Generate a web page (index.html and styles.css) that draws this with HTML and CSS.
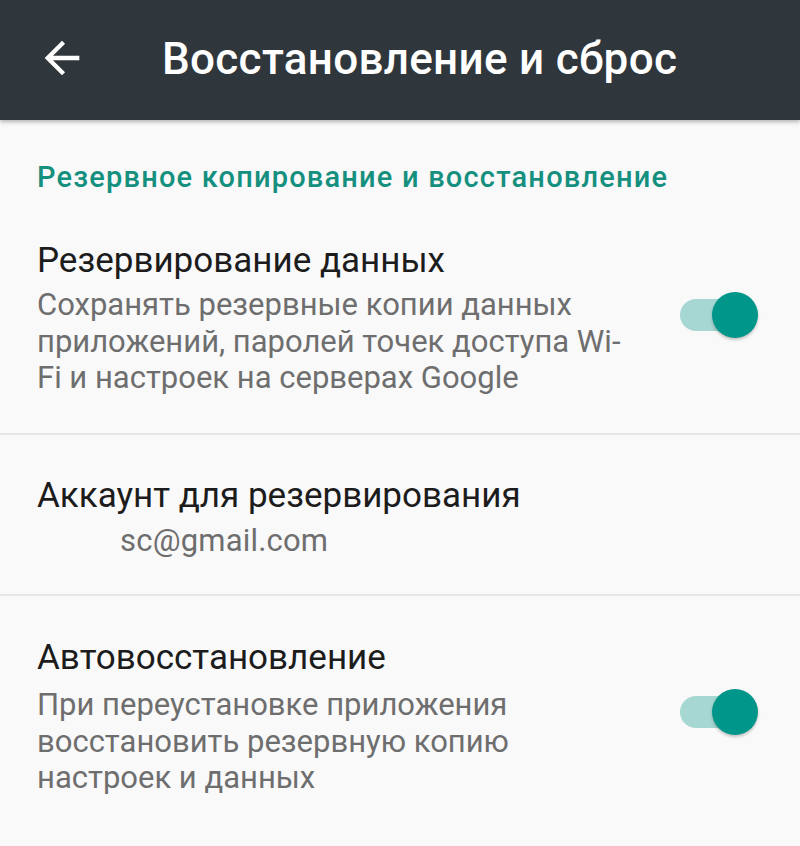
FILE: index.html
```html
<!DOCTYPE html>
<html lang="ru">
<head>
<meta charset="utf-8">
<title>Восстановление и сброс</title>
<link rel="stylesheet" href="styles.css">
</head>
<body>
<header class="appbar">
  <svg class="back" viewBox="0 0 24 24" width="52" height="52" aria-hidden="true">
    <path fill="#ffffff" d="M20 11H7.83l5.59-5.59L12 4l-8 8 8 8 1.41-1.41L7.83 13H20v-2z"/>
  </svg>
  <h1 class="title">Восстановление и сброс</h1>
</header>
<main class="list">
  <div class="category">Резервное копирование и восстановление</div>
  <div class="item backup">
    <div class="text">
      <div class="item-title">Резервирование данных</div>
      <div class="item-sub">Сохранять резервные копии данных<br>приложений, паролей точек доступа Wi-<br>Fi и настроек на серверах Google</div>
    </div>
    <div class="switch"><span class="track"></span><span class="thumb"></span></div>
  </div>
  <div class="item divided account">
    <div class="text">
      <div class="item-title">Аккаунт для резервирования</div>
      <div class="item-sub email">sc@gmail.com</div>
    </div>
  </div>
  <div class="item divided restore">
    <div class="text">
      <div class="item-title">Автовосстановление</div>
      <div class="item-sub">При переустановке приложения<br>восстановить резервную копию<br>настроек и данных</div>
    </div>
    <div class="switch"><span class="track"></span><span class="thumb"></span></div>
  </div>
</main>
</body>
</html>
```
FILE: styles.css
```css
html, body {
  margin: 0;
  padding: 0;
}
body {
  background: #f9f9fa;
  font-family: Roboto, "Noto Sans", sans-serif;
  width: 800px;
  height: 846px;
  overflow: hidden;
}
.appbar {
  height: 120px;
  background: #30373c;
  display: flex;
  align-items: center;
  box-shadow: 0 2px 4px rgba(0, 0, 0, 0.28);
  position: relative;
  z-index: 1;
}
.back {
  margin-left: 36px;
  margin-top: -4px;
  flex: none;
}
.title {
  margin: 0 0 0 74px;
  color: #ffffff;
  font-weight: 500;
  font-size: 44px;
  letter-spacing: 0.3px;
  line-height: 50px;
  margin-top: -2px;
}
.list {
  padding: 0;
}
.category {
  padding: 39px 37px 8px;
  color: #15907f;
  font-weight: 500;
  font-size: 29px;
  letter-spacing: 1.2px;
  line-height: 36px;
}
.item {
  display: flex;
  align-items: center;
  padding-left: 37px;
  padding-right: 40px;
}
.item.divided {
  border-top: 2px solid #e6e6e8;
}
.item.backup {
  padding-top: 36px;
  padding-bottom: 36px;
}
.item.account {
  padding-top: 39px;
  padding-bottom: 35px;
}
.item.restore {
  padding-top: 40px;
  padding-bottom: 35px;
}
.text {
  flex: 1;
}
.item-title {
  color: #1c1c1c;
  font-size: 35px;
  line-height: 44px;
}
.item-sub {
  color: #6e6e6e;
  font-size: 31px;
  line-height: 36.5px;
  margin-top: 4px;
}
.restore .item-sub {
  margin-top: 7px;
}
.email {
  padding-left: 83px;
  letter-spacing: 0.2px;
  margin-top: 5px;
}
.switch {
  position: relative;
  width: 80px;
  height: 46px;
  flex: none;
  margin-top: -6px;
}
.restore .switch {
  margin-top: -8px;
}
.track {
  position: absolute;
  left: 0;
  top: 7px;
  width: 70px;
  height: 32px;
  border-radius: 16px;
  background: #a6d7d2;
}
.thumb {
  position: absolute;
  left: 32px;
  top: 0;
  width: 46px;
  height: 46px;
  border-radius: 50%;
  background: #00968a;
  box-shadow: 0 2px 3px rgba(0, 0, 0, 0.22);
}
```
